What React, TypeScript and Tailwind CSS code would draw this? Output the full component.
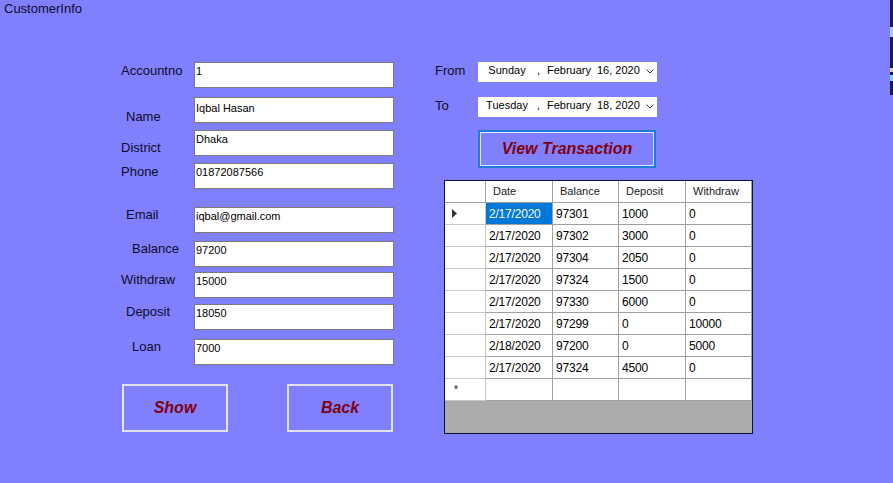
import React from "react";

const rows = [
  { label: "Accountno", value: "1", rowMt: "mt-[46px]", lpl: "pl-0", lmt: "mt-[1px]", vpt: "pt-[2px]" },
  { label: "Name", value: "Iqbal Hasan", rowMt: "mt-[9px]", lpl: "pl-[5px]", lmt: "mt-[12px]", vpt: "pt-[4px]" },
  { label: "District", value: "Dhaka", rowMt: "mt-[7px]", lpl: "pl-0", lmt: "mt-[10px]", vpt: "pt-[2px]" },
  { label: "Phone", value: "01872087566", rowMt: "mt-[7px]", lpl: "pl-0", lmt: "mt-[1px]", vpt: "pt-[2px]" },
  { label: "Email", value: "iqbal@gmail.com", rowMt: "mt-[18px]", lpl: "pl-[5px]", lmt: "mt-0", vpt: "pt-[2px]" },
  { label: "Balance", value: "97200", rowMt: "mt-[8px]", lpl: "pl-[11px]", lmt: "mt-0", vpt: "pt-[2px]" },
  { label: "Withdraw", value: "15000", rowMt: "mt-[5px]", lpl: "pl-0", lmt: "mt-0", vpt: "pt-[2px]" },
  { label: "Deposit", value: "18050", rowMt: "mt-[6px]", lpl: "pl-[5px]", lmt: "mt-0", vpt: "pt-[2px]" },
  { label: "Loan", value: "7000", rowMt: "mt-[9px]", lpl: "pl-[11px]", lmt: "mt-0", vpt: "pt-[2px]" },
];

const data = [
  ["2/17/2020", "97301", "1000", "0"],
  ["2/17/2020", "97302", "3000", "0"],
  ["2/17/2020", "97304", "2050", "0"],
  ["2/17/2020", "97324", "1500", "0"],
  ["2/17/2020", "97330", "6000", "0"],
  ["2/17/2020", "97299", "0", "10000"],
  ["2/18/2020", "97200", "0", "5000"],
  ["2/17/2020", "97324", "4500", "0"],
];

const colW = ["w-[67px]", "w-[66px]", "w-[67px]", "w-[66px]"];
const headers = ["Date", "Balance", "Deposit", "Withdraw"];

function Chevron() {
  return (
    <svg width="8" height="5" viewBox="0 0 8 5" className="mt-[5px]">
      <path d="M0.5 0.5 L4 4 L7.5 0.5" fill="none" stroke="#333" strokeWidth="1" />
    </svg>
  );
}

function DateBox({ day, date }: { day: string; date: string }) {
  return (
    <div className="w-[179px] h-[20px] bg-white flex items-start pl-[6px] pt-[2px] text-[11px] leading-[13px] text-black">
      <span className="w-[46px] text-center">{day}</span>
      <span className="w-[17px] pl-[7px]">,</span>
      <span className="w-[50px]">February</span>
      <span className="w-[49px]">{date}</span>
      <Chevron />
    </div>
  );
}

export default function App() {
  return (
    <div
      className="w-[893px] h-[483px] bg-[#8080ff] flex overflow-hidden text-[#0c0c28]"
      style={{ fontFamily: '"Liberation Sans", Arial, sans-serif' }}
    >
      <div className="w-[890px] flex flex-col">
        <div className="pl-[4px] pt-[1px] text-[13px] leading-[15px] h-[16px]">CustomerInfo</div>
        <div className="flex">
          {/* Left column */}
          <div className="ml-[121px] w-[273px] flex flex-col">
            {rows.map((r) => (
              <div key={r.label} className={`flex h-[26px] ${r.rowMt}`}>
                <div className={`w-[73px] text-[13px] leading-[15px] ${r.lpl} ${r.lmt}`}>{r.label}</div>
                <div
                  className={`w-[200px] h-[26px] bg-white border border-[#7a7a7a] pl-[1px] text-[11px] leading-[13px] text-black ${r.vpt}`}
                >
                  {r.value}
                </div>
              </div>
            ))}
            <div className="flex mt-[19px]">
              <div className="ml-[1px] w-[106px] h-[48px] border-2 border-[#e2e2ec] flex items-center justify-center text-[16px] font-bold italic text-[#800010]">
                Show
              </div>
              <div className="ml-[59px] w-[106px] h-[48px] border-2 border-[#e2e2ec] flex items-center justify-center text-[16px] font-bold italic text-[#800010]">
                Back
              </div>
            </div>
          </div>

          {/* Right column */}
          <div className="ml-[41px] flex flex-col">
            <div className="flex mt-[46px] h-[20px]">
              <div className="w-[43px] text-[13px] leading-[15px] mt-[1px]">From</div>
              <DateBox day="Sunday" date="16, 2020" />
            </div>
            <div className="flex mt-[15px] h-[20px]">
              <div className="w-[43px] text-[13px] leading-[15px] mt-[1px]">To</div>
              <DateBox day="Tuesday" date="18, 2020" />
            </div>
            <div className="ml-[43px] mt-[13px] w-[178px] h-[38px] border-2 border-[#1e7bd6] shadow-[inset_0_0_0_1px_#dfe6ff] flex items-center justify-center text-[16px] font-bold italic text-[#800010]">
              View Transaction
            </div>

            {/* Grid */}
            <div className="ml-[9px] mt-[12px] w-[309px] h-[254px] border border-[#101030] bg-[#ababab] flex flex-col text-black">
              <div className="flex h-[22px] bg-white">
                <div className="w-[41px] h-[22px] border-r border-b border-[#a0a0a0]" />
                {headers.map((h, i) => (
                  <div
                    key={h}
                    className={`${colW[i]} h-[22px] border-r border-b border-[#a0a0a0] flex items-center pl-[7px] text-[11px] leading-[13px] text-[#1a1a1a]`}
                  >
                    {h}
                  </div>
                ))}
              </div>
              {data.map((row, ri) => (
                <div key={ri} className="flex h-[22px] bg-white">
                  <div className="w-[41px] h-[22px] border-r border-b border-[#c8c8c8] flex items-center pl-[7px]">
                    {ri === 0 && (
                      <svg width="6" height="9" viewBox="0 0 6 9">
                        <path d="M0 0 L5 4.5 L0 9 Z" fill="#333" />
                      </svg>
                    )}
                  </div>
                  {row.map((c, ci) => (
                    <div
                      key={ci}
                      className={`${colW[ci]} h-[22px] border-r border-b border-[#a0a0a0] flex items-center pl-[3px] text-[12px] leading-[14px] tracking-[-0.2px] ${
                        ri === 0 && ci === 0 ? "bg-[#0078d7] text-white" : ""
                      }`}
                    >
                      {c}
                    </div>
                  ))}
                </div>
              ))}
              <div className="flex h-[22px] bg-white">
                <div className="w-[41px] h-[22px] border-r border-b border-[#c8c8c8] flex items-center pl-[9px] text-[10px] leading-[10px] font-bold text-[#555]">
                  *
                </div>
                {colW.map((w, ci) => (
                  <div key={ci} className={`${w} h-[22px] border-r border-b border-[#a0a0a0]`} />
                ))}
              </div>
              <div className="flex-1" />
            </div>
          </div>
        </div>
      </div>
      <div className="w-[3px] flex flex-col">
        <div className="h-[95px] bg-[#1c1e3e] flex flex-col">
          <div className="h-[27px]" />
          <div className="h-[10px] bg-[#a8c8f0]" />
          <div className="h-[31px]" />
          <div className="h-[4px] bg-[#e8c8a0]" />
          <div className="h-[3px]" />
          <div className="h-[6px] bg-[#80d0f0]" />
        </div>
      </div>
    </div>
  );
}
